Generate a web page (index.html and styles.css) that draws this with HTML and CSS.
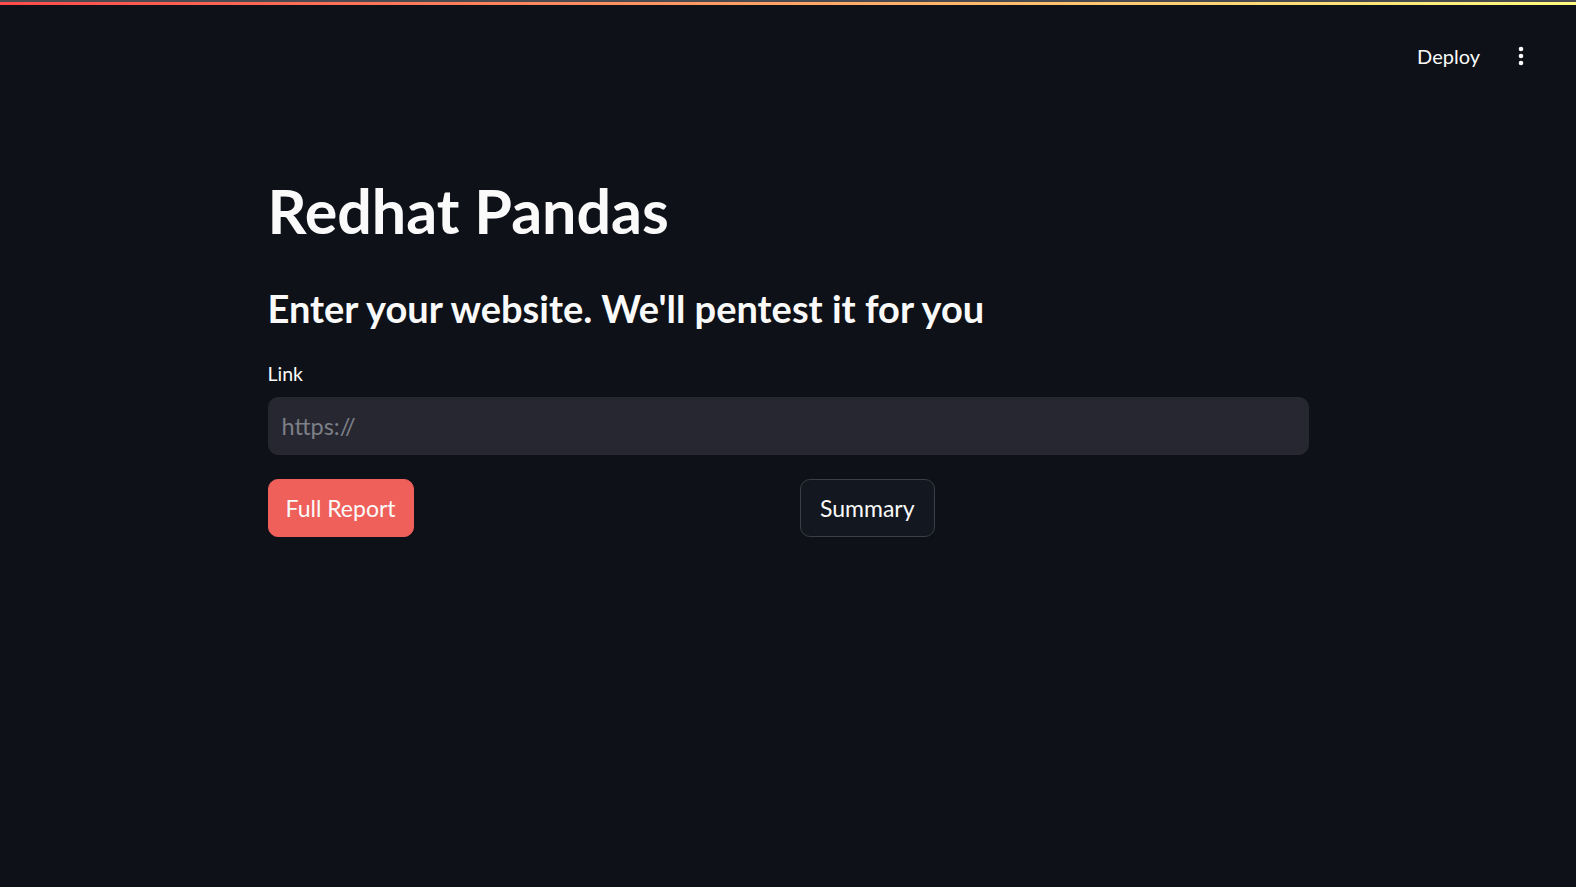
FILE: index.html
```html
<!DOCTYPE html>
<html lang="en">
<head>
<meta charset="utf-8">
<title>Redhat Pandas</title>
<link rel="stylesheet" href="styles.css">
</head>
<body>
<div class="decoration"></div>
<header class="header">
  <button class="deploy">Deploy</button>
  <button class="menu" aria-label="Main menu">
    <svg width="6" height="20" viewBox="0 0 6 20"><circle cx="3" cy="3" r="2.3" fill="#fafafa"/><circle cx="3" cy="10" r="2.3" fill="#fafafa"/><circle cx="3" cy="17" r="2.3" fill="#fafafa"/></svg>
  </button>
</header>
<main class="main">
  <h1 class="title">Redhat Pandas</h1>
  <h3 class="subtitle">Enter your website. We'll pentest it for you</h3>
  <label class="label" for="link">Link</label>
  <input class="input" id="link" type="text" placeholder="https://">
  <div class="columns">
    <div class="col"><button class="btn btn-primary">Full Report</button></div>
    <div class="col"><button class="btn btn-secondary">Summary</button></div>
  </div>
</main>
</body>
</html>
```
FILE: styles.css
```css
html, body {
  margin: 0;
  padding: 0;
  background: #0e1117;
  color: #fafafa;
  font-family: Lato, "Open Sans", sans-serif;
  height: 100%;
  overflow: hidden;
}
.decoration {
  height: 3px;
  border-top: 2px solid #4a4b50;
  background: linear-gradient(90deg, #ff4b4b, #fffd80);
}
.header {
  height: 102px;
  display: flex;
  align-items: center;
  justify-content: flex-end;
  padding-right: 52px;
  gap: 38px;
  box-sizing: border-box;
}
.deploy {
  background: none;
  border: none;
  color: #fafafa;
  font-family: inherit;
  font-size: 20px;
  padding: 0;
}
.menu {
  background: none;
  border: none;
  padding: 0;
  display: flex;
}
.main {
  width: 1041px;
  margin: 0 auto;
  display: flex;
  flex-direction: column;
}
.title {
  margin: 67px 0 0;
  font-size: 61px;
  font-weight: 700;
  line-height: 1.2;
}
.subtitle {
  margin: 39px 0 0;
  font-size: 38px;
  font-weight: 700;
  line-height: 1.2;
}
.label {
  margin-top: 30.5px;
  font-size: 19.5px;
  line-height: 1.2;
}
.input {
  margin-top: 11px;
  height: 58px;
  box-sizing: border-box;
  background: #262730;
  border: 1px solid #262730;
  border-radius: 10px;
  padding: 0 13px;
  font-family: inherit;
  font-size: 23.5px;
  color: #fafafa;
  outline: none;
}
.input::placeholder {
  color: #7d7f87;
}
.columns {
  margin-top: 24px;
  display: grid;
  grid-template-columns: 1fr 1fr;
  gap: 23px;
}
.col {
  display: flex;
}
.btn {
  height: 58.5px;
  border-radius: 10px;
  padding: 0 17px;
  font-family: inherit;
  font-size: 23px;
  color: #fafafa;
  cursor: pointer;
}
.btn-primary {
  background: #f0605a;
  border: 1px solid #f0605a;
}
.btn-secondary {
  padding: 0 19.5px;
  background: #131720;
  border: 1px solid #3b3e46;
}
```
